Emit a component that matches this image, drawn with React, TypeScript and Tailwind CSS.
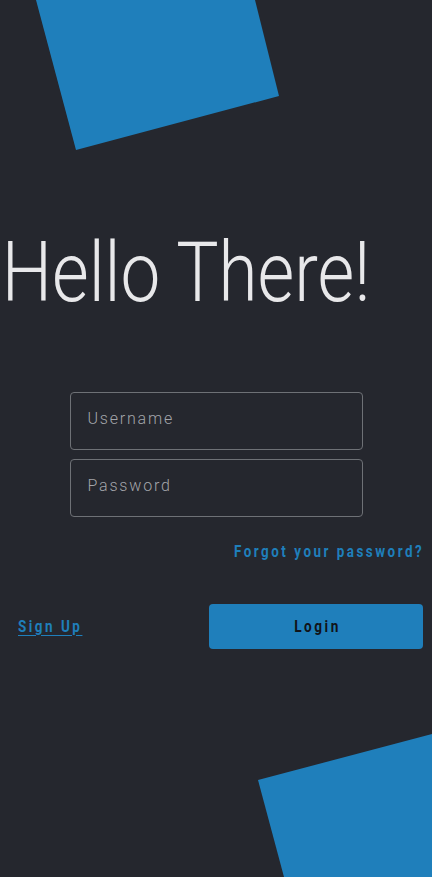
import React from 'react';

export default function App() {
  return (
    <div className="relative min-h-[877px] w-full overflow-hidden bg-[#25272e] font-['Roboto',sans-serif]">
      {/* decorative squares */}
      <svg className="absolute left-0 top-0" width="432" height="877" viewBox="0 0 432 877">
        <polygon points="36,0 255,0 279,96 76,150" fill="#1f7fbb" />
        <polygon points="258,780 432,734 432,877 284,877" fill="#1f7fbb" />
      </svg>

      <div className="relative flex flex-col">
        <h1 className="mt-[231px] h-[83px] origin-left scale-x-[0.855] whitespace-nowrap pl-[2px] text-[83px] font-light leading-none text-[#e8e8ea]">
          Hello There!
        </h1>

        <form className="mx-auto mt-[78px] flex w-[293px] flex-col gap-[9px]" onSubmit={e => e.preventDefault()}>
          <input
            type="text"
            placeholder="Username"
            className="h-[58px] rounded-[4px] border border-[#6e7176] bg-transparent px-[17px] pb-[5px] text-[16px] font-light tracking-[1.8px] text-[#d0d0d0] outline-none placeholder:text-[#a3a5aa]"
          />
          <input
            type="password"
            placeholder="Password"
            className="h-[58px] rounded-[4px] border border-[#6e7176] bg-transparent px-[17px] pb-[5px] text-[16px] font-light tracking-[1.8px] text-[#d0d0d0] outline-none placeholder:text-[#a3a5aa]"
          />
        </form>

        <div className="mt-[25px] flex justify-end pr-[8px]">
          <a href="#" className="inline-block origin-right scale-x-[0.837] text-[16px] font-bold leading-5 tracking-[3px] text-[#1f7fbb]">
            Forgot your password?
          </a>
        </div>

        <div className="mt-[42px] flex items-center justify-between pl-[18px] pr-[9px]">
          <a href="#" className="inline-block origin-left scale-x-[0.84] text-[16px] font-bold tracking-[3px] text-[#1f7fbb] underline underline-offset-[3px]">
            Sign Up
          </a>
          <button className="flex h-[45px] w-[214px] items-center justify-center rounded-[4px] bg-[#1f7fbb] pl-[4px] text-[16px] font-bold tracking-[3px] text-[#111318]">
            <span className="inline-block scale-x-[0.85]">Login</span>
          </button>
        </div>
      </div>
    </div>
  );
}
